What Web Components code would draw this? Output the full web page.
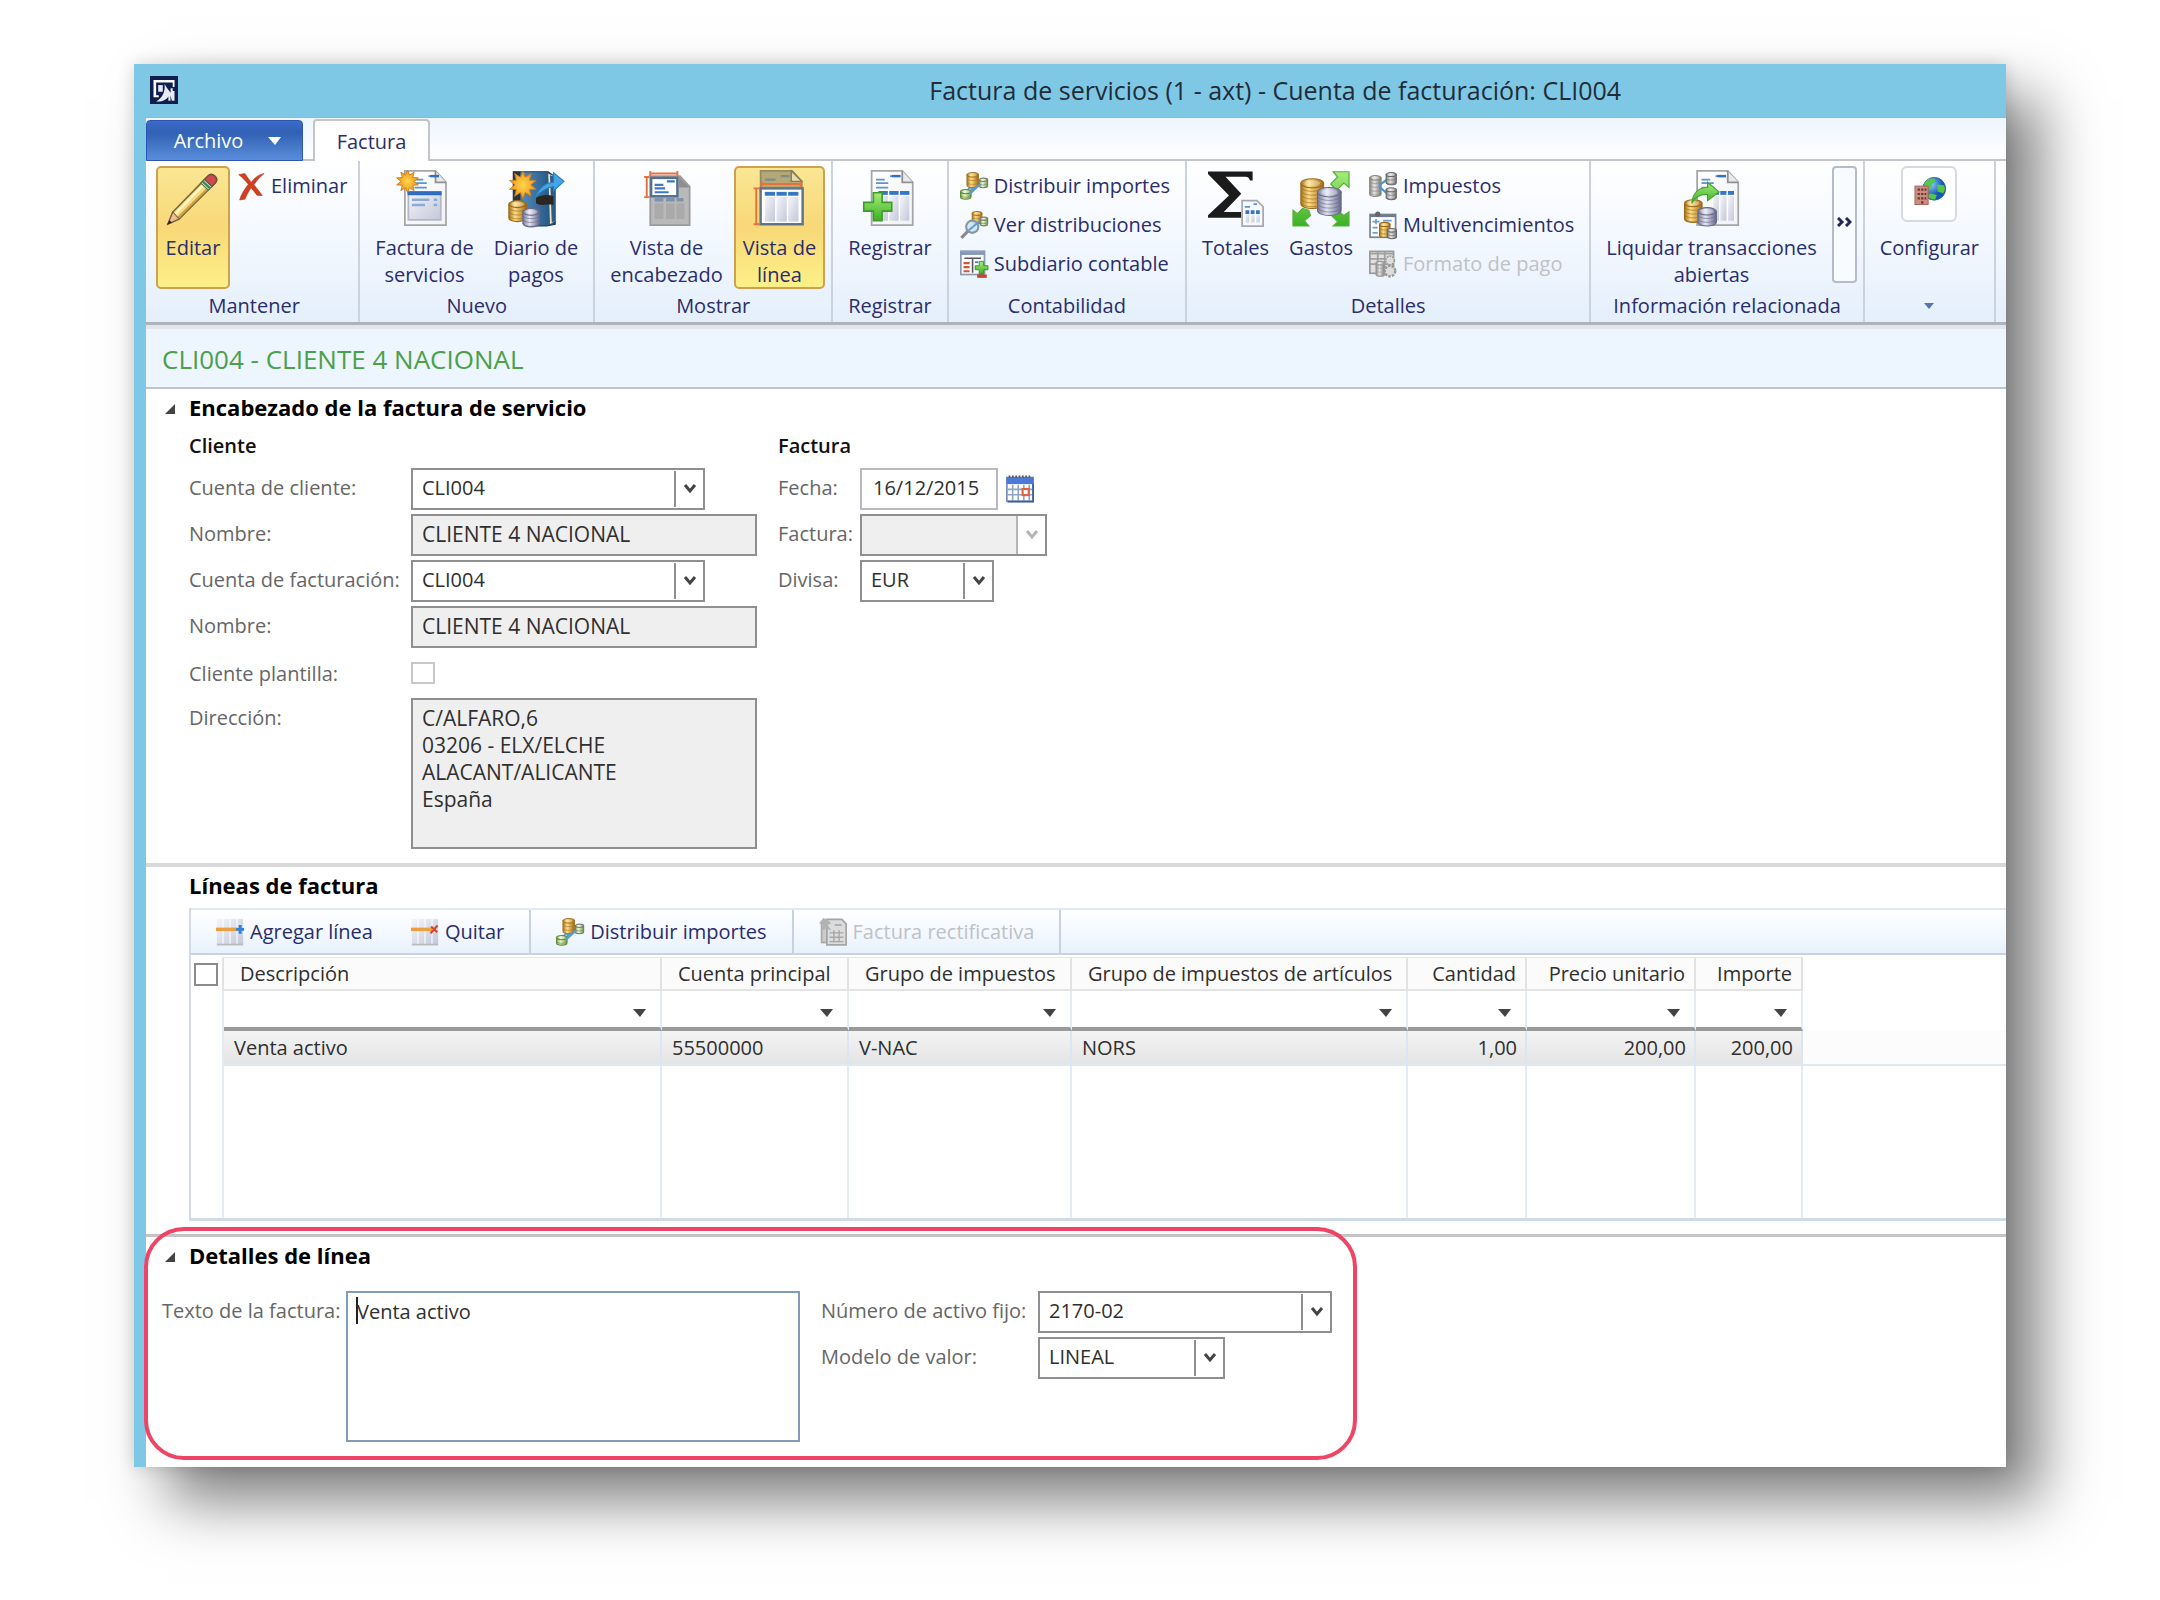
<!DOCTYPE html>
<html lang="es">
<head>
<meta charset="utf-8">
<title>Factura de servicios</title>
<style>
  * { box-sizing: border-box; }
  body {
    margin: 0;
    padding: 64px 154px 134px 134px;
    background: #fff;
    color: #2f2f2f;
    font: 20px/27px "Open Sans", "Noto Sans", sans-serif;
    overflow-x: hidden;
  }
  .columns { display: flex; align-items: flex-start; }
  .client { --label-width: 222px; width: 611px; margin-right: 21px; }
  .invoice { --label-width: 82px; }
  .detail-fields { display: flex; align-items: flex-start; gap: 21px; padding: 18px 0 25px 16px; }
  .memo { --label-width: 184px; }
  .asset { --label-width: 217px; }
  .w-l { --field-width: 294px; }
  .w-xl { --field-width: 346px; }
  .w-m { --field-width: 187px; }
  .w-s { --field-width: 134px; }
  .w-date { --field-width: 138px; }
  .w-memo { --field-width: 454px; }
</style>
</head>
<body>

<erp-window heading="Factura de servicios (1 - axt) - Cuenta de facturación: CLI004">
  <ribbon-bar>
    <ribbon-group label="Mantener" first>
      <ribbon-button icon="pencil" active>Editar</ribbon-button>
      <ribbon-stack>
        <small-button icon="delete">Eliminar</small-button>
      </ribbon-stack>
    </ribbon-group>
    <ribbon-group label="Nuevo">
      <ribbon-button icon="newInvoice">Factura de<br>servicios</ribbon-button>
      <ribbon-button icon="journal">Diario de<br>pagos</ribbon-button>
    </ribbon-group>
    <ribbon-group label="Mostrar">
      <ribbon-button icon="headerView">Vista de<br>encabezado</ribbon-button>
      <ribbon-button icon="lineView" active>Vista de<br>línea</ribbon-button>
    </ribbon-group>
    <ribbon-group label="Registrar">
      <ribbon-button icon="post">Registrar</ribbon-button>
    </ribbon-group>
    <ribbon-group label="Contabilidad">
      <ribbon-stack roomy>
        <small-button icon="distribute">Distribuir importes</small-button>
        <small-button icon="viewDist">Ver distribuciones</small-button>
        <small-button icon="subledger">Subdiario contable</small-button>
      </ribbon-stack>
    </ribbon-group>
    <ribbon-group label="Detalles">
      <ribbon-button icon="totals">Totales</ribbon-button>
      <ribbon-button icon="charges">Gastos</ribbon-button>
      <ribbon-stack roomy>
        <small-button icon="taxes">Impuestos</small-button>
        <small-button icon="schedule">Multivencimientos</small-button>
        <small-button icon="format" disabled>Formato de pago</small-button>
      </ribbon-stack>
    </ribbon-group>
    <ribbon-group label="Información relacionada">
      <ribbon-button icon="settle">Liquidar transacciones<br>abiertas</ribbon-button>
      <more-button></more-button>
    </ribbon-group>
    <ribbon-group caret>
      <ribbon-button icon="setup" boxed>Configurar</ribbon-button>
    </ribbon-group>
  </ribbon-bar>

  <record-caption>CLI004 - CLIENTE 4 NACIONAL</record-caption>

  <fast-tab heading="Encabezado de la factura de servicio" arrow>
    <div class="columns">
      <field-group class="client" heading="Cliente" indent>
        <combo-field class="w-l" label="Cuenta de cliente:" value="CLI004"></combo-field>
        <text-field class="w-xl" label="Nombre:" value="CLIENTE 4 NACIONAL" readonly></text-field>
        <combo-field class="w-l" label="Cuenta de facturación:" value="CLI004"></combo-field>
        <text-field class="w-xl" label="Nombre:" value="CLIENTE 4 NACIONAL" readonly></text-field>
        <check-field label="Cliente plantilla:"></check-field>
        <memo-field class="w-xl" label="Dirección:" readonly value="C/ALFARO,6&#10;03206 - ELX/ELCHE&#10;ALACANT/ALICANTE&#10;España"></memo-field>
      </field-group>
      <field-group class="invoice" heading="Factura">
        <text-field class="w-date" label="Fecha:" value="16/12/2015" calendar></text-field>
        <combo-field class="w-m" label="Factura:" value="" disabled></combo-field>
        <combo-field class="w-s" label="Divisa:" value="EUR"></combo-field>
      </field-group>
    </div>
  </fast-tab>

  <fast-tab class="lines" heading="Líneas de factura">
    <lines-grid></lines-grid>
  </fast-tab>

  <fast-tab heading="Detalles de línea" arrow highlight>
    <div class="detail-fields">
      <memo-field class="memo w-memo" label="Texto de la factura:" value="Venta activo" editing></memo-field>
      <field-group class="asset">
        <combo-field class="w-l" label="Número de activo fijo:" value="2170-02"></combo-field>
        <combo-field class="w-m" label="Modelo de valor:" value="LINEAL"></combo-field>
      </field-group>
    </div>
  </fast-tab>
</erp-window>

<script>
  // ---------- icon drawing helpers ----------
  const DEFS = `<defs>
    <linearGradient id="gold"><stop offset="0" stop-color="#a8741f"/><stop offset=".35" stop-color="#ffdf86"/><stop offset="1" stop-color="#a66a14"/></linearGradient>
    <linearGradient id="silver"><stop offset="0" stop-color="#777a9b"/><stop offset=".4" stop-color="#e6e6f1"/><stop offset="1" stop-color="#62668b"/></linearGradient>
    <linearGradient id="grey"><stop offset="0" stop-color="#888"/><stop offset=".4" stop-color="#e4e4e4"/><stop offset="1" stop-color="#777"/></linearGradient>
    <linearGradient id="lime"><stop offset="0" stop-color="#7fae4a"/><stop offset=".4" stop-color="#ecf8d5"/><stop offset="1" stop-color="#6d9a3e"/></linearGradient>
    <linearGradient id="green" x2="0" y2="1"><stop offset="0" stop-color="#a5ec79"/><stop offset="1" stop-color="#3cb023"/></linearGradient>
    <linearGradient id="page" x2="1" y2="1"><stop offset="0" stop-color="#fff"/><stop offset="1" stop-color="#f1f2f5"/></linearGradient>
    <linearGradient id="cells" x2="1" y2="1"><stop offset="0" stop-color="#f4f5fa"/><stop offset="1" stop-color="#c3c8d9"/></linearGradient>
    <linearGradient id="book" x2="1"><stop offset="0" stop-color="#27445f"/><stop offset=".25" stop-color="#4d86b5"/><stop offset="1" stop-color="#1f4f7e"/></linearGradient>
    <radialGradient id="sun"><stop offset="0" stop-color="#ffd84a"/><stop offset="1" stop-color="#f0931c"/></radialGradient>
    <radialGradient id="globe" cx=".35" cy=".3"><stop offset="0" stop-color="#8fd0ff"/><stop offset="1" stop-color="#1557b8"/></radialGradient>
  </defs>`;

  // stack of coins: top ellipse, body and rims
  const coins = (x, y, w, h, fill, edge) => {
    const r = w / 2, ry = w / 5;
    let rims = '';
    for (let i = ry + 2; i < h - ry; i += 2.2) {
      rims += `<path d="M${x} ${y + i}a${r} ${ry} 0 0 0 ${w} 0" fill="none" stroke="${edge}" stroke-width=".5" opacity=".7"/>`;
    }
    return `<path d="M${x} ${y + ry}V${y + h - ry}a${r} ${ry} 0 0 0 ${w} 0V${y + ry}z" fill="url(#${fill})" stroke="${edge}" stroke-width=".6"/>${rims}
      <ellipse cx="${x + r}" cy="${y + ry}" rx="${r}" ry="${ry}" fill="url(#${fill})" stroke="${edge}" stroke-width=".6"/>
      <ellipse cx="${x + r}" cy="${y + ry}" rx="${r * .7}" ry="${ry * .6}" fill="#fff" opacity=".3"/>`;
  };
  const page = (x, fill = 'url(#page)', edge = '#a5a5a5') =>
    `<path d="M${x + .5} .5h17.5l6 6.500V31.500H${x + .5}z" fill="${fill}" stroke="${edge}"/>
     <path d="M${x + 18} .5v6.500h6" fill="#e8e8e8" stroke="#909090"/>`;
  const star = (cx, cy, r) => {
    let pts = '';
    for (let i = 0; i < 20; i++) {
      const a = Math.PI * i / 10, q = i % 2 ? r * .58 : r;
      pts += `${(cx + q * Math.sin(a)).toFixed(1)},${(cy - q * Math.cos(a)).toFixed(1)} `;
    }
    return `<polygon points="${pts}" fill="url(#sun)" stroke="#c97b1b" stroke-width=".5"/>`;
  };
  const textLines = x => `<path d="M${x + 11} 3.500h6M${x + 3} 5.500h5M${x + 3} 7.500h7M${x + 3} 10h7" stroke="#5b93d3" stroke-width="1"/><path d="M${x + 12} 3.500h5" stroke="#2f6fc4" stroke-width="1.400"/>`;
  const table = (x, y, w, h) => {
    const c = w / 3;
    let out = `<rect x="${x}" y="${y}" width="${w}" height="${h}" fill="#fff"/>`;
    for (let i = 0; i < 3; i++) {
      out += `<rect x="${x + i * c + .4}" y="${y}" width="${c - .8}" height="2.200" fill="#3576c9"/>
        <rect x="${x + i * c + .4}" y="${y + 2.800}" width="${c - .8}" height="${h - 2.800}" fill="url(#cells)"/>`;
    }
    return out;
  };
  const distribution = `<path d="M5 12L12 6M6 10l8-4M4 11L9 4" stroke="#5b9bd0" stroke-width="1.200"/>
    ${coins(4, .3, 6.500, 8.500, 'gold', '#a5751d')}${coins(11, 3.500, 4.800, 5.500, 'lime', '#777')}${coins(.3, 10, 6, 5.500, 'lime', '#5c8a33')}
    <path d="M5.500 12.500L11.500 7" stroke="#5b9bd0" stroke-width="1.300"/>`;

  const ICONS = {
    pencil: [32, `<path d="M4.500 24L24.500 3.500c2.500-2.500 6.500 1 4.300 3.800L8 28l-6.300 2.800z" fill="#f5dc85" stroke="#7a6a35" stroke-width=".9"/>
      <path d="M5.500 25.500L25.500 5" stroke="#fff6c5" stroke-width="1.400"/><path d="M7.300 27.300L28 7" stroke="#cfa145" stroke-width="1.100"/>
      <path d="M22.500 5.500l2-2c2.500-2.500 6.500 1 4.300 3.800L26.800 9.500z" fill="#cf4a4a" stroke="#7a4a45" stroke-width=".8"/>
      <path d="M20.500 7.500l2-2 4.300 4-2 2z" fill="#e9efe9" stroke="#456a45" stroke-width=".6"/><path d="M21.500 6.500l4.300 4" stroke="#3f8a49" stroke-width="1.400"/>
      <path d="M4.500 24L8 28l-6.300 2.800z" fill="#eebf96" stroke="#7a5a3a" stroke-width=".6"/><path d="M2.600 28.700l1.300 1.300-2.700 1.300z" fill="#222"/>`],
    delete: [16, `<path d="M1 1.500l3.500-.7C6 3 7 4.500 8.200 5.800 10 3.500 12 1.500 15.500.8 13 3 11 5 9.700 7.300c1.500 2 3 3.700 4.800 6.200l-3-.2C10.300 11.700 9 10.300 8 9c-1.300 2-2.300 4-3.500 6.500L1.500 16C2.500 12.500 4.500 9.500 6.500 7 4.500 4.700 3 3 1 1.500z" fill="#d2401f" stroke="#a52d16" stroke-width=".3"/>`],
    newInvoice: [32, `${page(4)}${textLines(7)}<rect x="6.500" y="12.500" width="18.500" height="16" fill="url(#cells)" stroke="#b3b8c8"/>
      <path d="M6 13.300h19.500" stroke="#2f6cbf" stroke-width="2.200"/><path d="M8.500 17h10M8.500 20h7.500M21 17h2M21 20h2" stroke="#8cabd6" stroke-width="1.400"/>${star(6, 6.500, 6.500)}`],
    journal: [32, `<path d="M3 1h20l4 3v27l-5 1H12L3 20z" fill="url(#book)" stroke="#1c3a58" stroke-width=".6"/>
      <path d="M3 1h4v18H3z" fill="#2b3238"/><path d="M23 2l4 2v25l-3 2z" fill="#f1e4c4"/><path d="M24 3l3 1v25l-2 1z" fill="#2a5c8d"/>
      <path d="M16 16c3-2 7-2 10-1v5c-4-1-7 1-10-1z" fill="#2b2622"/><path d="M15 16c3-6 6-8.500 11-9V1.500l6 5-6 5.500V9.500c-4 .5-7 2.500-11 6.500z" fill="#43a5e8" stroke="#2a7dbd" stroke-width=".6"/>
      ${star(8.500, 8.500, 8)}${coins(.5, 17.500, 10, 12, 'gold', '#9a6a18')}${coins(8.500, 22, 9.500, 10.500, 'silver', '#666a88')}`],
    headerView: [32, `<path d="M7 3.500h17l5.500 6V31.500H7z" fill="#b9b9b9" stroke="#9b9b9b"/><path d="M23.500 4v6h6z" fill="#8e8e8e"/>
      <path d="M9.500 17h5M16 17h5M22 17h4" stroke="#7d93ad" stroke-width="2"/><path d="M9.500 19v9h5v-9zM16 19v9h5v-9zM22 19v9h4.500v-9z" fill="#aaa"/>
      <rect x="7.500" y="4.500" width="15" height="10.500" fill="#fff" stroke="#55708f" stroke-width="1.400"/>
      <path d="M16.500 6.500h4.500M9.500 8.500h5M9.500 10.500h6M9.500 12.700h8" stroke="#3c78c6" stroke-width="1.200"/>
      <path d="M7 .5v3M22.500 .5v3M7 2h15.500M3.500 4h3M3.500 15.500h3M5 4v11.500" stroke="#e8703a" stroke-width="1.100" fill="none"/>`],
    lineView: [32, `<path d="M5.500 .5h18l5.500 6V12H5.500z" fill="#b4a878" stroke="#948a62"/><path d="M23 .5v6h6z" fill="#e8dcae" stroke="#857b55" stroke-width=".8"/>
      <path d="M17 3.500h5M8 5.500h6" stroke="#7d8c86" stroke-width="1.200"/><rect x="5.500" y="10.500" width="24" height="20.500" fill="#fff" stroke="#5e7489" stroke-width="1.400"/>
      ${table(7.500, 12.500, 20, 17)}<path d="M6 6.500v3M28.500 6.500v3M6 8h22.500M1.500 10.500h3.500M1.500 31h3.500M3 10.500V31" stroke="#e8703a" stroke-width="1.100"/>`],
    post: [32, `${page(5)}${textLines(5)}${table(9, 12, 18.500, 17)}<path d="M6.500 13h5v5.500H17v5h-5.500V29h-5v-5.500H1v-5h5.500z" fill="url(#green)" stroke="#3f9a2d" stroke-width=".9"/>`],
    totals: [32, `<path d="M0 .8h25.500V6h-1.500c-.6-2-1.500-2.200-4-2.200H10L19 13.500 9 24H19v3.300H0v-1.500L12 14.500 0 2.300z" fill="#1b1b1b"/>
      <path d="M19.500 17.500h8.500l3.500 3.500v11h-12z" fill="#f7f8fa" stroke="#a5a8ae"/><path d="M21 21h3M26 19.500h2" stroke="#5c92d4"/>${table(21, 23, 9, 7)}`],
    charges: [32, `<path d="M23 1h9v9l-3-2.500-4 4-3.500-3.500 4-4z M9 23l-3.500-1-3 3L0 23v9h9l-2.500-3L10 26z M32 32h-9l2.500-2.500L22 26l3.500-3 3.500 3 3-2z" fill="url(#green)" stroke="#58b13c" stroke-width=".7"/>
      ${coins(4.500, 5, 13, 17, 'gold', '#9a6a18')}${coins(14, 10, 13.500, 16, 'silver', '#666a88')}`],
    settle: [32, `${page(7)}${textLines(7)}${table(16, 12, 13, 17)}${coins(.3, 17, 10, 13, 'gold', '#9a6a18')}${coins(8, 21.500, 10.500, 10.500, 'silver', '#666a88')}
      <path d="M4.500 19c.5-6 4-9 9-9V7l6.500 5.500-6.500 5v-3.500c-4-.3-7 1.500-9 5z" fill="url(#green)" stroke="#43a32c" stroke-width=".7"/>`],
    setup: [32, `<circle cx="19" cy="13" r="6.500" fill="url(#globe)" stroke="#2a5f9f" stroke-width=".5"/>
      <path d="M13.500 9.500c2-3 5-2.500 6-2 0 2-2 2-2 4s-2 2-4 1zM20.500 10.500l4 .5c1 2 .5 3.500-.5 4.500l-3-1zM16.500 15.500l4 1-1 2.700c-2 0-4-.7-4-2z" fill="#55c843"/>
      <rect x="8" y="11.500" width="7.500" height="10.500" fill="#c98d82" stroke="#a9685d" stroke-width=".6"/>
      <path d="M9.500 13.500h1.300M11.500 13.500h1.300M13.500 13.500h1M9.500 16h1.300M11.500 16h1.300M13.500 16h1M9.500 18.500h1.300M11.500 18.500h1.300M13.500 18.500h1M11.500 20.800h1.300" stroke="#6b352c" stroke-width="1.200"/>`],
    distribute: [16, distribution],
    viewDist: [16, `${coins(7, .3, 5.500, 7, 'gold', '#a5751d')}${coins(11.500, 3.500, 4.300, 5, 'lime', '#777')}
      <path d="M.8 15.300L5 11" stroke="#888" stroke-width="1.800"/><circle cx="7" cy="9" r="3.500" fill="#cfe3ef" fill-opacity=".85" stroke="#8497a5" stroke-width="1.200"/><path d="M5 11l6-5" stroke="#5b9bd0"/>`],
    subledger: [16, `<rect x=".5" y=".7" width="13.500" height="13.300" fill="#fff" stroke="#8d9bb3"/><path d="M.5 2h13.500" stroke="#8195bd" stroke-width="1.600"/>
      <path d="M2.500 4.700h9.500M7.200 4.700V13" stroke="#556" stroke-width=".9"/><path d="M2 7.500h3.500M2 9.800h3.500M2 12.100h3.500" stroke="#d4573c" stroke-width="1.200"/><path d="M8.500 7h2" stroke="#3c78c6"/>
      <path d="M11 6.500h2.500V9H16v2.300h-2.500v2.500H11v-2.500H8.700V9H11z" fill="url(#green)" stroke="#2d8c22" stroke-width=".5"/><rect x="9.800" y="14" width="5.500" height="1.900" fill="#d0402a"/>`],
    taxes: [16, `${coins(.4, 2, 6.500, 12, 'grey', '#8d8577')}<path d="M6 7.500l4-3M6 8.500l4 3.500" stroke="#4b93d0" stroke-width="1.200"/>
      ${coins(9.800, .3, 5.800, 7, 'grey', '#666')}${coins(9.800, 9, 5.800, 6.800, 'grey', '#666')}`],
    schedule: [16, `<rect x=".6" y="2" width="14.600" height="13" fill="#fff" stroke="#7c8794"/><path d="M.6 2.800h14.600" stroke="#6f7c8c" stroke-width="1.400"/><circle cx="5" cy="1.800" r="1.500" fill="#666"/>
      <path d="M2 6h4M4 4.500v3M8 5.500h5M2 9.500h3M2 12.500h3" stroke="#6d9fd6"/>${coins(6, 6.500, 6, 8.500, 'gold', '#9a6a18')}${coins(10.500, 10, 5.200, 5.800, 'grey', '#666')}`],
    format: [16, `<rect x=".5" y=".8" width="13.500" height="12.500" fill="#e0e0e0" stroke="#9a9a9a"/><path d="M.5 2h14M.5 5h13M.5 8h13M5 1v12M9 1v6" stroke="#a0a0a0"/>
      ${coins(4, 6.500, 5, 8.500, 'grey', '#999')}<circle cx="12" cy="6" r="2.500" fill="#ddd" stroke="#999" stroke-dasharray="1 .6"/><circle cx="12" cy="12" r="3" fill="#ddd" stroke="#999" stroke-width="1.400" stroke-dasharray="1.400 .7"/>`],
    addLine: [16, `<rect x=".5" y=".5" width="15" height="14.500" fill="url(#cells)"/><path d="M4 .5v15M8 .5v15M12 .5v15" stroke="#fff" stroke-width=".6"/><path d="M.5 15.200h15" stroke="#bbb"/>
      <path d="M0 6.500h12.500" stroke="#eba040" stroke-width="2"/><path d="M11.500 6.500h4.500M13.800 4v5" stroke="#2f82d8" stroke-width="1.700"/>`],
    removeLine: [16, `<rect x=".5" y=".5" width="15" height="14.500" fill="url(#cells)"/><path d="M4 .5v15M8 .5v15M12 .5v15" stroke="#fff" stroke-width=".6"/><path d="M.5 15.200h15" stroke="#bbb"/>
      <path d="M0 6.500h12" stroke="#eba040" stroke-width="2"/><path d="M11.500 4.800l3.500 3.400M15.200 4.300l-4 4.400" stroke="#d2492c" stroke-width="1.200"/>`],
    creditNote: [16, `<rect x="1.500" y="3" width="9" height="11" fill="#ccc" stroke="#aaa"/><path d="M4.500 .8h8.500l2.500 2.500v12H4.500z" fill="#dcdcdc" stroke="#a5a5a5"/>
      <path d="M6 8.500h8M6 11h8M6 13.500h8M8.500 7v7M11.500 7v7" stroke="#a8a8a8" stroke-width=".8"/><path d="M9 4h4" stroke="#aaa"/><path d="M0 3l2.500-3L5 1l2 2-2 1 2 3-3-1-2 1 .3-3z" fill="#b2b2b2"/>`],
    calendar: [16, `<rect x=".5" y="1.500" width="15" height="13.500" fill="#fff" stroke="#7d90b8"/><rect x=".3" y="1.200" width="15.400" height="4" fill="#4a7ad6"/>
      <path d="M1.500 .9h13" stroke="#555" stroke-width="1.300" stroke-dasharray="1 .9"/><path d="M1 8.200h14M1 11.300h14M3.800 5.500v9.500M7 5.500v9.500M10.200 5.500v9.500M13.300 5.500v9.500" stroke="#8ea3cc" stroke-width=".9"/>
      <path d="M15.500 5v10.200H1" stroke="#3d5c98" fill="none"/><rect x="9.500" y="8" width="3.500" height="3.500" fill="#fff" stroke="#e2603a" stroke-width="1.200"/>`],
    logo: [16, `<rect width="16" height="16" fill="#0f1e4e"/><path d="M2 2.300h12v4h-1V3.700H3.500v7.300H5v1.200H2z" fill="#fff"/><path d="M4.700 5.200h2.600V9H4.700z" fill="#e8ecf8"/>
      <path d="M8.300 4.500c.5 4-1 8-4.800 10 3.500.3 6-1 7-3v2.700h1.200V11l.8 3.200H14V8.500h-1V7h-1.200v2.500L9.800 7z" fill="#e8ecf8"/>`]
  };

  const BASE = `* { box-sizing: border-box; } button, input, select, textarea { font: inherit; color: inherit; margin: 0; }`;
  const mount = (el, css, html) => {
    el.attachShadow({ mode: 'open' }).innerHTML = `<style>${BASE}${css}</style>${html}`;
  };

  class AxIcon extends HTMLElement {
    connectedCallback() {
      const [box, art] = ICONS[this.getAttribute('name')];
      mount(this, `:host { display: block; flex: none; width: 28px; height: 28px; }
        :host([large]) { width: 56px; height: 56px; }
        svg { display: block; width: 100%; height: 100%; overflow: visible; }`,
        `<svg viewBox="0 0 ${box} ${box}" fill="none" aria-hidden="true">${DEFS}${art}</svg>`);
    }
  }
  customElements.define('ax-icon', AxIcon);

  class ErpWindow extends HTMLElement {
    connectedCallback() {
      mount(this, `
        :host {
          display: block;
          background: #fff;
          border-left: 12px solid #7ec8e6;
          box-shadow: 34px 34px 56px rgba(0,0,0,.5), 0 0 16px rgba(0,0,0,.16);
        }
        header {
          display: flex;
          align-items: center;
          height: 53px;
          padding: 0 4px 2px;
          background: #7ec8e6;
        }
        h1 {
          flex: 1;
          margin: 0;
          padding-left: 20%;
          text-align: center;
          font-size: 25px;
          line-height: 34px;
          font-weight: 400;
          color: #222c36;
        }`,
        `<header><ax-icon name="logo"></ax-icon><h1>${this.getAttribute('heading')}</h1></header><slot></slot>`);
    }
  }
  customElements.define('erp-window', ErpWindow);

  class RibbonBar extends HTMLElement {
    connectedCallback() {
      mount(this, `
        :host { display: block; color: #2a2d6c; border-bottom: 4px solid #e2e6ec; }
        nav {
          display: flex;
          align-items: flex-end;
          gap: 10px;
          height: 44px;
          border-top: 1px solid #9db4c8;
          background: linear-gradient(#eef5ff, #fff);
          box-shadow: inset 0 -2px #c3c5cb;
        }
        button {
          display: flex;
          align-items: center;
          justify-content: center;
          padding: 0;
          border: 2px solid #c3c5cb;
          border-bottom: 0;
          border-radius: 4px 4px 0 0;
          background: #fff;
          height: 42px;
          width: 117px;
        }
        .file {
          width: 157px;
          height: 41px;
          padding-left: 6px;
          gap: 25px;
          color: #fff;
          border: 1px solid #2d55b0;
          background: linear-gradient(#3a6bc8, #3160b4 30%, #5a8edb);
        }
        .groups {
          display: flex;
          height: 164px;
          border-bottom: 3px solid #adb2bb;
          background: linear-gradient(#fff, #f3f8ff 50%, #e4effb);
        }`,
        `<nav>
          <button class="file" type="button">Archivo
            <svg width="13" height="8" aria-hidden="true"><path d="M0 0h13L7 8z" fill="#fff"/></svg>
          </button>
          <button type="button">Factura</button>
        </nav>
        <div class="groups"><slot></slot></div>`);
    }
  }
  customElements.define('ribbon-bar', RibbonBar);

  class RibbonGroup extends HTMLElement {
    connectedCallback() {
      const foot = this.hasAttribute('caret')
        ? '<svg width="10" height="6" aria-hidden="true"><path d="M0 0h10L5 6z" fill="#5575ad"/></svg>'
        : this.getAttribute('label');
      mount(this, `
        :host {
          display: flex;
          flex-direction: column;
          flex: none;
          padding: 5px 6px 0;
          border-right: 2px solid #ccd2db;
        }
        :host([first]) { padding-left: 10px; }
        .items { display: flex; flex: 1; gap: 2px; align-items: flex-start; }
        .foot { display: flex; height: 33px; align-items: center; justify-content: center; }`,
        `<div class="items"><slot></slot></div><div class="foot">${foot}</div>`);
    }
  }
  customElements.define('ribbon-group', RibbonGroup);

  class RibbonButton extends HTMLElement {
    connectedCallback() {
      mount(this, `
        :host { display: block; }
        button {
          display: flex;
          flex-direction: column;
          align-items: center;
          height: 123px;
          padding: 2px 7px 0;
          border: 2px solid transparent;
          border-radius: 5px;
          background: none;
          white-space: nowrap;
        }
        :host([active]) button {
          border-color: #cda14e;
          background: linear-gradient(#fae693, #f8d878 50%, #fdf088);
        }
        .box { display: block; margin-bottom: 8px; }
        :host([boxed]) button { padding-top: 0; }
        :host([boxed]) .box { border: 2px solid #d5d9e2; border-radius: 6px; background: #fff; margin: -2px 0 12px; width: 56px; height: 56px; }
        :host([boxed]) ax-icon { margin: -2px; }`,
        `<button type="button"><span class="box"><ax-icon large name="${this.getAttribute('icon')}"></ax-icon></span><span><slot></slot></span></button>`);
    }
  }
  customElements.define('ribbon-button', RibbonButton);

  class RibbonStack extends HTMLElement {
    connectedCallback() {
      mount(this, `
        :host { display: flex; flex-direction: column; }
        :host([roomy]) { padding-right: 4px; }`, `<slot></slot>`);
    }
  }
  customElements.define('ribbon-stack', RibbonStack);

  class SmallButton extends HTMLElement {
    connectedCallback() {
      mount(this, `
        :host { display: block; }
        button {
          display: flex;
          align-items: center;
          gap: 6px;
          height: 39px;
          padding: 0 5px;
          border: 0;
          background: none;
          white-space: nowrap;
        }
        button:disabled { color: #bfc1c6; }`,
        `<button type="button" ${this.hasAttribute('disabled') ? 'disabled' : ''}><ax-icon name="${this.getAttribute('icon')}"></ax-icon><slot></slot></button>`);
    }
  }
  customElements.define('small-button', SmallButton);

  class MoreButton extends HTMLElement {
    connectedCallback() {
      mount(this, `
        :host { display: block; margin-left: 4px; }
        button {
          display: grid;
          place-items: center;
          width: 25px;
          height: 117px;
          padding: 0 0 6px;
          border: 2px solid #b4bcc9;
          border-radius: 4px;
          background: #f8fbff;
        }`,
        `<button type="button" aria-label="Más">
          <svg width="15" height="10" fill="none" stroke="#23265f" stroke-width="3" aria-hidden="true"><path d="M1 1l4 4-4 4M9 1l4 4-4 4"/></svg>
        </button>`);
    }
  }
  customElements.define('more-button', MoreButton);

  class RecordCaption extends HTMLElement {
    connectedCallback() {
      mount(this, `
        :host {
          display: block;
          padding: 13px 16px 11px;
          border-bottom: 2px solid #bfc4c9;
          background: #edf5fe;
          color: #4ba04b;
        }
        h2 { margin: 0; font-size: 26px; line-height: 34px; font-weight: 400; }`, `<h2><slot></slot></h2>`);
    }
  }
  customElements.define('record-caption', RecordCaption);

  class FastTab extends HTMLElement {
    connectedCallback() {
      mount(this, `
        :host { display: block; position: relative; border-bottom: 4px solid #d9d9d9; }
        :host(.lines) { border-bottom: 3px solid #c4c4c4; }
        :host([highlight]) { border-bottom: 0; }
        h3 {
          display: flex;
          align-items: center;
          margin: 0;
          height: 36px;
          padding-left: 19px;
          font-size: 22px;
          font-weight: 700;
          color: #000;
        }
        svg { width: 10px; height: 10px; margin: 4px 14px 0 0; }
        .mark {
          position: absolute;
          inset: -10px auto 7px -2px;
          width: 1213px;
          border: 4px solid #ee4466;
          border-radius: 40px;
          pointer-events: none;
        }`,
        `<h3><svg viewBox="0 0 10 10" aria-hidden="true">${this.hasAttribute('arrow') ? '<path d="M10 0v10H0z" fill="#444"/>' : ''}</svg>${this.getAttribute('heading')}</h3>
        <slot></slot>
        ${this.hasAttribute('highlight') ? '<div class="mark"></div>' : ''}`);
    }
  }
  customElements.define('fast-tab', FastTab);

  class FieldGroup extends HTMLElement {
    connectedCallback() {
      const heading = this.getAttribute('heading');
      mount(this, `
        :host { display: block; }
        :host([heading]) { padding: 0 0 14px; }
        :host([indent]) .fields, :host([indent]) h4 { margin-left: 43px; }
        h4 { margin: 0; height: 43px; line-height: 41px; font-size: 20px; font-weight: 600; color: #111; }
        .fields { display: grid; gap: 4px; }`,
        `${heading ? `<h4>${heading}</h4>` : ''}<div class="fields"><slot></slot></div>`);
    }
  }
  customElements.define('field-group', FieldGroup);

  const FIELD = `
    :host { display: grid; grid-template-columns: var(--label-width) auto; justify-content: start; align-items: start; color: #2f2f2f; }
    label { padding-top: 6px; color: #666; white-space: nowrap; }
    .control { width: var(--field-width); height: 42px; border: 2px solid #8f8f8f; border-radius: 0; background: #fff; outline: 0; }
    input.control, textarea.control { padding: 0 9px 3px; }
    [readonly] { background: #efefef !important; font-size: 21px; }`;

  class TextField extends HTMLElement {
    connectedCallback() {
      const calendar = this.hasAttribute('calendar');
      mount(this, `${FIELD}
        .row { display: flex; align-items: center; gap: 8px; }
        :host([calendar]) .control { border-color: #b9b9c1; padding-left: 11px; }
        button { border: 0; padding: 0; background: none; }`,
        `<label for="f">${this.getAttribute('label')}</label>
        <div class="row">
          <input class="control" id="f" value="${this.getAttribute('value')}" ${this.hasAttribute('readonly') ? 'readonly' : ''}>
          ${calendar ? '<button type="button" aria-label="Calendario"><ax-icon name="calendar"></ax-icon></button>' : ''}
        </div>`);
    }
  }
  customElements.define('text-field', TextField);

  class ComboField extends HTMLElement {
    connectedCallback() {
      const off = this.hasAttribute('disabled');
      mount(this, `${FIELD}
        .control { display: grid; grid-template-columns: 1fr 29px; align-items: center; }
        select {
          grid-area: 1 / 1 / 2 / 3;
          width: 100%;
          height: 100%;
          padding: 0 30px 3px 9px;
          border: 0;
          outline: 0;
          appearance: none;
          background: none;
          opacity: 1;
        }
        .arrow {
          grid-area: 1 / 2;
          display: grid;
          place-items: center;
          height: 36px;
          border-left: 2px solid #8f8f8f;
          pointer-events: none;
          color: #444;
        }
        :host([disabled]) .arrow { color: #b5b5b5; border-color: #b5b5b5; background: #fff; height: 38px; }
        :host([disabled]) .control { background: #efefef; }`,
        `<label for="f">${this.getAttribute('label')}</label>
        <div class="control">
          <select id="f" ${off ? 'disabled' : ''}><option>${this.getAttribute('value')}</option></select>
          <span class="arrow"><svg width="14" height="10" fill="none" stroke="currentColor" stroke-width="3" aria-hidden="true"><path d="M2 1l5 6 5-6"/></svg></span>
        </div>`);
    }
  }
  customElements.define('combo-field', ComboField);

  class CheckField extends HTMLElement {
    connectedCallback() {
      mount(this, `${FIELD}
        :host { height: 42px; align-items: center; }
        label { padding: 0; }
        input { appearance: none; width: 24px; height: 22px; border: 2px solid #c6c9cb; background: #fff; }`,
        `<label for="f">${this.getAttribute('label')}</label><input id="f" type="checkbox">`);
    }
  }
  customElements.define('check-field', CheckField);

  class MemoField extends HTMLElement {
    connectedCallback() {
      mount(this, `${FIELD}
        .box { position: relative; display: flex; }
        textarea.control { height: 151px; padding-top: 5px; resize: none; overflow: hidden; }
        :host([editing]) textarea { border-color: #7f9cb8; }
        :host([editing]) .box::after {
          content: "";
          position: absolute;
          left: 10px;
          top: 6px;
          width: 2px;
          height: 27px;
          background: #222;
        }`,
        `<label for="f">${this.getAttribute('label')}</label>
        <div class="box"><textarea class="control" id="f" spellcheck="false" ${this.hasAttribute('readonly') ? 'readonly' : ''}>${this.getAttribute('value')}</textarea></div>`);
    }
  }
  customElements.define('memo-field', MemoField);

  const COLUMNS = [
    { title: 'Descripción', value: 'Venta activo', width: 438 },
    { title: 'Cuenta principal', value: '55500000', width: 187 },
    { title: 'Grupo de impuestos', value: 'V-NAC', width: 223 },
    { title: 'Grupo de impuestos de artículos', value: 'NORS', width: 336 },
    { title: 'Cantidad', value: '1,00', width: 119, num: true },
    { title: 'Precio unitario', value: '200,00', width: 169, num: true },
    { title: 'Importe', value: '200,00', width: 107, num: true }
  ];

  class LinesGrid extends HTMLElement {
    connectedCallback() {
      const cells = fn => COLUMNS.map(fn).join('');
      mount(this, `
        :host { display: block; margin: 5px 0 13px 43px; border: solid #cfdbe8; border-width: 0 0 3px 2px; }
        .toolbar {
          display: flex;
          height: 47px;
          padding-left: 20px;
          color: #2a2d6c;
          border-top: 2px solid #e0eaf6;
          border-bottom: 2px solid #c5d3e3;
          background: linear-gradient(#fff, #f4f9ff 50%, #e8f1fc);
        }
        .set { display: flex; align-items: center; gap: 28px; padding: 0 20px; border-right: 2px solid #c8d1dd; }
        .set:first-child { padding-left: 0; }
        table { table-layout: fixed; width: 100%; border-collapse: separate; border-spacing: 0; margin-top: 2px; }
        th, td { padding: 0; border-right: 2px solid #e3ebf6; font-weight: 400; text-align: left; white-space: nowrap; }
        th:last-child, td:last-child { border-right: 0; }
        thead tr:first-child { height: 34px; }
        thead tr:first-child th { padding-left: 16px; border-top: 1px solid #e6e6e6; border-bottom: 2px solid #e4e4e4; border-right-color: #e2e2e2; background: #fbfbfb; }
        thead th.num { text-align: right; padding-right: 9px; }
        thead tr:first-child th:first-child, thead tr:first-child th:last-child { padding-left: 3px; background: #fff; border-top-color: #fff; border-bottom: 0; }
        .filter { height: 40px; }
        .filter td { text-align: right; padding-right: 14px; border-bottom: 4px solid #999; }
        .filter td:first-child, .filter td:last-child { border-bottom: 0; }
        .filter button { border: 0; padding: 0; background: none; display: inline-flex; }
        .data { height: 35px; }
        .data td { padding-left: 10px; border-bottom: 2px solid #dfe8f5; background: linear-gradient(#f4f4f4, #e4e4e4); border-right-color: #dae6f5; }
        .data td:first-child { background: #fff; border-bottom: 0; border-right-color: #e3ebf6; }
        .data td:last-child { background: #fcfcfc; }
        .data .num { text-align: right; padding-right: 8px; }
        .rest { height: 152px; }
        input { display: block; appearance: none; width: 24px; height: 23px; border: 2px solid #8c8c8c; background: #fff; }`,
        `<div class="toolbar">
          <div class="set"><small-button icon="addLine">Agregar línea</small-button><small-button icon="removeLine">Quitar</small-button></div>
          <div class="set"><small-button icon="distribute">Distribuir importes</small-button></div>
          <div class="set"><small-button icon="creditNote" disabled>Factura rectificativa</small-button></div>
        </div>
        <table>
          <colgroup><col style="width: 33px">${cells(c => `<col style="width: ${c.width}px">`)}<col></colgroup>
          <thead>
            <tr><th><input type="checkbox" aria-label="Seleccionar todo"></th>${cells(c => `<th class="${c.num ? 'num' : ''}">${c.title}</th>`)}<th></th></tr>
            <tr class="filter"><td></td>${cells(c => `<td><button type="button" aria-label="Filtrar ${c.title}"><svg width="13" height="8" aria-hidden="true"><path d="M0 0h13L7 8z" fill="#444"/></svg></button></td>`)}<td></td></tr>
          </thead>
          <tbody>
            <tr class="data"><td></td>${cells(c => `<td class="${c.num ? 'num' : ''}">${c.value}</td>`)}<td></td></tr>
            <tr class="rest"><td></td>${cells(() => '<td></td>')}<td></td></tr>
          </tbody>
        </table>`);
    }
  }
  customElements.define('lines-grid', LinesGrid);
</script>
</body>
</html>
